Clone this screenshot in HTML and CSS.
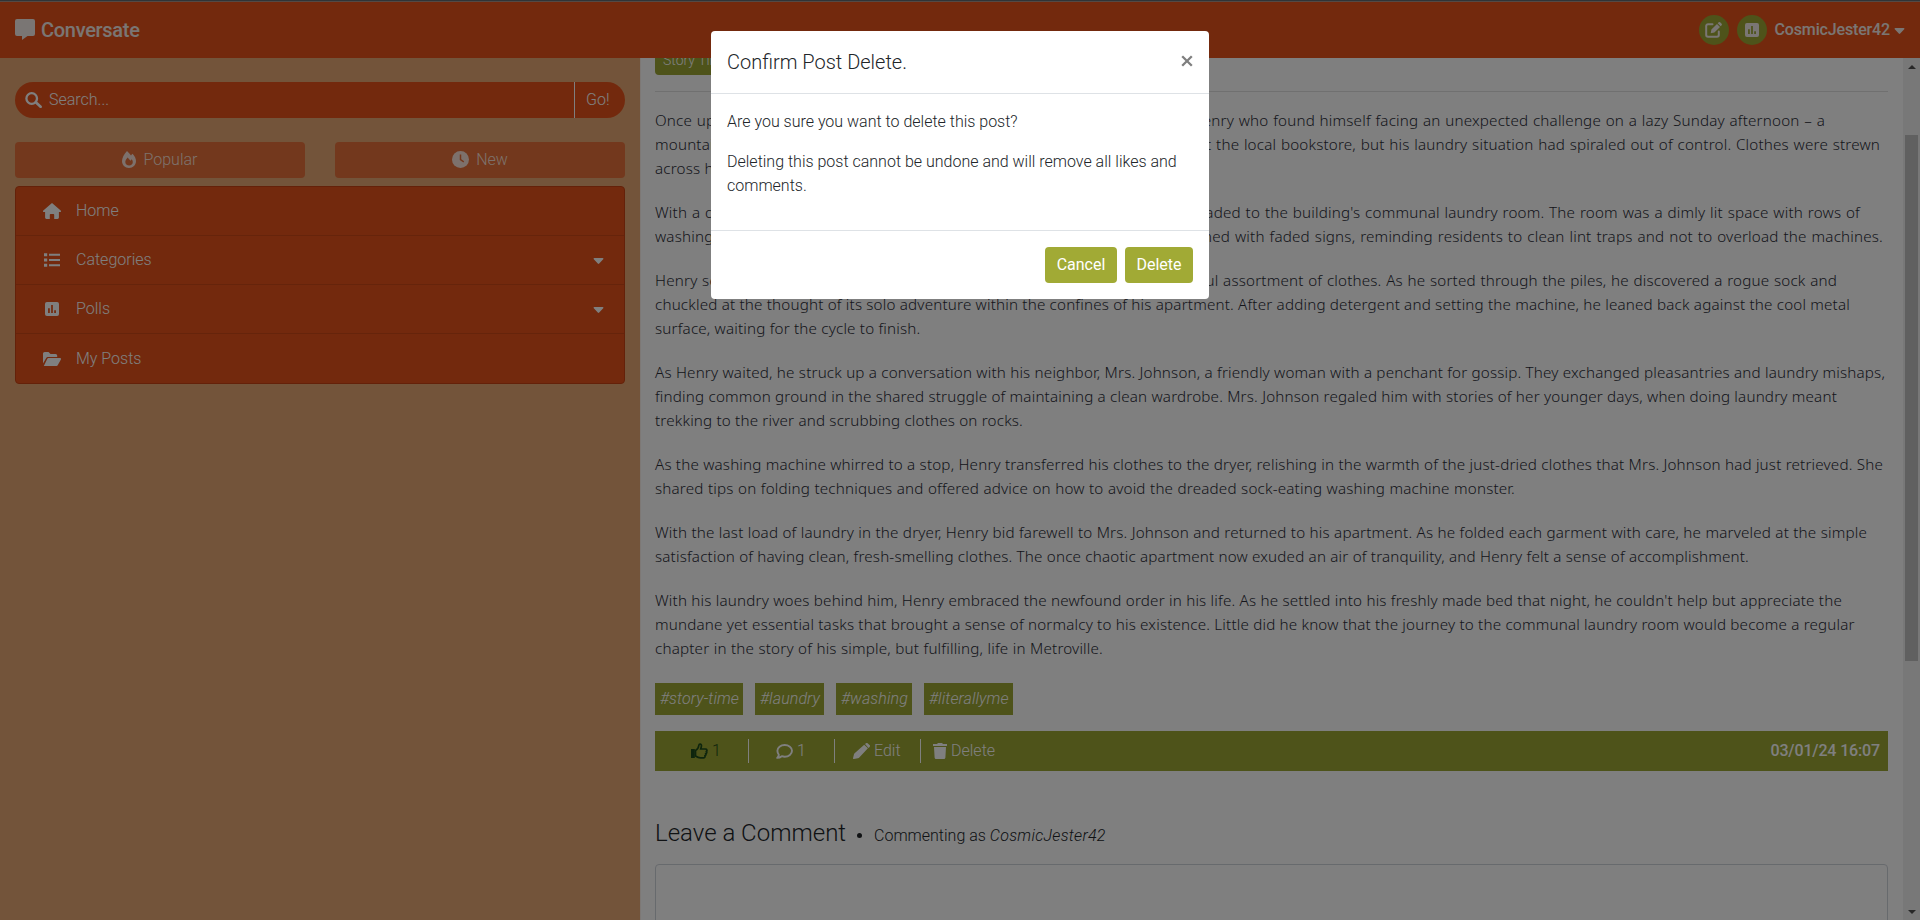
FILE: index.html
```html
<!DOCTYPE html>
<html lang="en">
<head>
<meta charset="utf-8">
<title>Conversate</title>
<link rel="stylesheet" href="styles.css">
</head>
<body>
<svg class="defs" width="0" height="0" aria-hidden="true">
  <symbol id="i-poll" viewBox="0 0 16 16"><path fill-rule="evenodd" d="M2.2 0h11.6A2.2 2.2 0 0 1 16 2.2v11.6a2.2 2.2 0 0 1-2.200 2.200H2.200A2.200 2.200 0 0 1 0 13.800V2.200A2.200 2.200 0 0 1 2.200 0zM3.500 7v5.500h2V7zM7 3.500v9h2v-9zM10.500 9.500v3h2v-3z"/></symbol>
  <symbol id="i-caret" viewBox="0 0 12 7"><path d="M1.200 0h9.600c.9 0 1.300 1 .7 1.600L6.800 6.500a1.100 1.100 0 0 1-1.600 0L.5 1.600C-.1 1 .3 0 1.200 0z"/></symbol>
</svg>
<div class="app">
  <header class="topbar">
    <div class="brand">
      <svg width="20" height="21" viewBox="0 0 20 21"><path d="M2 0h16a2 2 0 0 1 2 2v13a2 2 0 0 1-2 2h-5.500l-5.500 4v-4H2a2 2 0 0 1-2-2V2a2 2 0 0 1 2-2z"/></svg>
      <span>Conversate</span>
    </div>
    <div class="account">
      <span class="round"><svg width="17" height="16" viewBox="0 0 17 16"><path d="M7.500 2.200H3A1.800 1.800 0 0 0 1.200 4v9A1.800 1.800 0 0 0 3 14.800h9a1.800 1.800 0 0 0 1.800-1.800V9.500" fill="none" stroke="currentColor" stroke-width="2" stroke-linecap="round"/><path d="M12.700 1.200l3 3 .7-.7a1.400 1.400 0 0 0 0-2l-1-1a1.400 1.400 0 0 0-2 0zM12 1.900l3 3-5.600 5.600-3.700.8.700-3.800z"/></svg></span>
      <span class="round"><svg width="14" height="14"><use href="#i-poll"/></svg></span>
      <span class="user">CosmicJester42</span>
      <svg class="user-caret" width="11" height="6"><use href="#i-caret"/></svg>
    </div>
  </header>
  <div class="columns">
    <aside class="sidebar">
      <div class="search">
        <svg width="17" height="16" viewBox="0 0 17 16"><circle cx="6.700" cy="6.500" r="5.300" fill="none" stroke="currentColor" stroke-width="2.300"/><path d="M10.800 10.300l4.800 4.500" stroke="currentColor" stroke-width="2.600" stroke-linecap="round"/></svg>
        <span class="placeholder">Search...</span>
        <span class="go">Go!</span>
      </div>
      <div class="filters">
        <div class="filter"><svg width="16" height="17" viewBox="0 0 16 17"><path fill-rule="evenodd" d="M6 0c1.600 1.400 2.900 2.900 4 4.500.5-.7 1-1.300 1.500-1.800C13.700 4.900 15 7.600 15 10c0 4-3 7-7 7s-7-3-7-7C1 7 3 3.300 6 0zM8.200 14.500c2 0 3.600-1.300 3.600-3.400 0-1.100-.5-2-1.100-2.900L9.500 9.800 6.600 6.500C5.200 8.200 4.300 9.500 4.300 11c0 2.200 1.700 3.500 3.900 3.500z"/></svg>Popular</div>
        <div class="filter new"><svg width="17" height="17" viewBox="0 0 17 17"><circle cx="8.500" cy="8.500" r="8.500"/><path class="cut" d="M8.500 3.500v5.200l3.300 2.100"/></svg>New</div>
      </div>
      <nav class="menu">
        <a class="item"><span class="ico"><svg width="18" height="16" viewBox="0 0 18 16"><path d="M9 0l8.700 7.600c.6.600.3 1.400-.6 1.400h-1.200v5.600c0 .8-.6 1.400-1.400 1.400h-3.300v-4c0-.6-.4-1-1-1H7.800c-.6 0-1 .4-1 1v4H3.500c-.8 0-1.400-.6-1.400-1.400V9H.9C0 9-.3 8.200.3 7.600z"/></svg></span>Home</a>
        <a class="item"><span class="ico"><svg width="16" height="14" viewBox="0 0 16 14"><path d="M0 .2h3.200v3H0zM0 5.500h3.200v3H0zM0 10.800h3.200v3H0zM5 .8h11v2H5zM5 6h11v2H5zM5 11.300h11v2H5z"/></svg></span>Categories<svg class="drop" width="11" height="6"><use href="#i-caret"/></svg></a>
        <a class="item"><span class="ico"><svg width="14" height="14"><use href="#i-poll"/></svg></span>Polls<svg class="drop" width="11" height="6"><use href="#i-caret"/></svg></a>
        <a class="item last"><span class="ico"><svg width="18" height="14" viewBox="0 0 18 14"><path d="M0 11.500V1.800C0 .8.700 0 1.700 0h3.800l2 2h5c1 0 1.700.8 1.700 1.700V5H5.200c-.9 0-1.700.5-2.100 1.200zM.8 14l3.500-7.300c.2-.4.600-.7 1.100-.7h11.700c.8 0 1.200.8.8 1.500l-3.200 5.800c-.2.400-.6.700-1.100.7z"/></svg></span>My Posts</a>
      </nav>
    </aside>
    <main class="content">
      <div class="category">Story Time</div>
      <hr class="rule">
      <article class="story">
        <p><span class="line l1">Once upon a time in the city of Metroville, there lived a young chap named Henry who found himself facing an unexpected challenge on a lazy Sunday afternoon – a</span><span class="line l2">mountain of dirty laundry. He had been caught up in his work and his shifts at the local bookstore, but his laundry situation had spiraled out of control. Clothes were strewn</span><span class="line">across his apartment in colorful heaps.</span></p>
        <p><span class="line l4">With a deep sigh, Henry gathered clothes in a basket, took detergent, and headed to the building's communal laundry room. The room was a dimly lit space with rows of</span><span class="line l5">washing machines humming along. The walls of the laundry room were adorned with faded signs, reminding residents to clean lint traps and not to overload the machines.</span></p>
        <p><span class="line l6">Henry selected a vacant washing machine and began to load it with his colorful assortment of clothes. As he sorted through the piles, he discovered a rogue sock and</span><span class="line l7">chuckled at the thought of its solo adventure within the confines of his apartment. After adding detergent and setting the machine, he leaned back against the cool metal</span><span class="line l8">surface, waiting for the cycle to finish.</span></p>
        <p><span class="line l9">As Henry waited, he struck up a conversation with his neighbor, Mrs. Johnson, a friendly woman with a penchant for gossip. They exchanged pleasantries and laundry mishaps,</span><span class="line l10">finding common ground in the shared struggle of maintaining a clean wardrobe. Mrs. Johnson regaled him with stories of her younger days, when doing laundry meant</span><span class="line l11">trekking to the river and scrubbing clothes on rocks.</span></p>
        <p><span class="line l12">As the washing machine whirred to a stop, Henry transferred his clothes to the dryer, relishing in the warmth of the just-dried clothes that Mrs. Johnson had just retrieved. She</span><span class="line l13">shared tips on folding techniques and offered advice on how to avoid the dreaded sock-eating washing machine monster.</span></p>
        <p><span class="line l14">With the last load of laundry in the dryer, Henry bid farewell to Mrs. Johnson and returned to his apartment. As he folded each garment with care, he marveled at the simple</span><span class="line l15">satisfaction of having clean, fresh-smelling clothes. The once chaotic apartment now exuded an air of tranquility, and Henry felt a sense of accomplishment.</span></p>
        <p><span class="line l16">With his laundry woes behind him, Henry embraced the newfound order in his life. As he settled into his freshly made bed that night, he couldn't help but appreciate the</span><span class="line l17">mundane yet essential tasks that brought a sense of normalcy to his existence. Little did he know that the journey to the communal laundry room would become a regular</span><span class="line l18">chapter in the story of his simple, but fulfilling, life in Metroville.</span></p>
      </article>
      <div class="tags"><span class="tag t1">#story-time</span><span class="tag t2">#laundry</span><span class="tag t3">#washing</span><span class="tag t4">#literallyme</span></div>
      <div class="actions">
        <span class="act like"><svg width="17" height="16" viewBox="0 0 17 16"><path d="M0 6h3.800v9H0z"/><path d="M4.500 7.500c1.800-.8 3-2.700 3.300-5C8 1.300 8.500.9 9.200 1c1.200.3 1.500 1.500 1 3.200L9.700 6h4.800c1.500 0 1.900 1.600.9 2.400.7.900.3 1.900-.6 2.200.4.900 0 1.700-.8 2 .3 1.300-.4 2.200-1.600 2.200H9.500c-1.800 0-3-.5-5-1.800z" fill="none" stroke="currentColor" stroke-width="1.700"/></svg>1</span>
        <span class="act comment"><svg width="17" height="15" viewBox="0 0 17 15"><path d="M8.700 1c4.100 0 7.300 2.500 7.300 5.800s-3.200 5.900-7.300 5.900c-1 0-2-.2-2.900-.5-1.100.9-2.700 1.700-4.600 1.700.9-.9 1.500-2 1.600-3.100C2 9.700 1.400 8.300 1.400 6.800 1.400 3.500 4.600 1 8.700 1z" fill="none" stroke="currentColor" stroke-width="1.900" stroke-linejoin="round"/></svg>1</span>
        <span class="act edit"><svg width="17" height="16" viewBox="0 0 17 16"><path d="M12 1l1-.7a1.500 1.500 0 0 1 1.900.1l1.600 1.500a1.400 1.400 0 0 1 .1 2l-1.100 1zM11.200 1.800l3.700 3.500-8.600 9.300c-.4.400-.8.600-1.300.7L.8 16c-.5.100-.9-.3-.8-.8l1-3.900c.1-.4.300-.8.600-1.100z"/></svg>Edit</span>
        <span class="act delete"><svg width="14" height="16" viewBox="0 0 14 16"><path d="M0 1h4l1-1h4l1 1h4v2H0zM1 4h12l-.6 10.500c0 .8-.7 1.500-1.500 1.500H3.100c-.8 0-1.500-.7-1.500-1.500z"/></svg>Delete</span>
        <span class="date">03/01/24 16:07</span>
      </div>
      <div class="comment-head"><h3>Leave a Comment</h3><span class="dot"></span><span class="as">Commenting as <i>CosmicJester42</i></span></div>
      <div class="box"></div>
    </main>
    <div class="scrollbar"><i class="up"></i><div class="thumb"></div><i class="down"></i></div>
  </div>
</div>
<div class="backdrop">
  <div class="modal">
    <div class="modal-head"><h5>Confirm Post Delete.</h5><svg class="close" width="12" height="12" viewBox="0 0 12 12"><path d="M1.200 1.200l9.600 9.600M10.800 1.200l-9.600 9.600" stroke="currentColor" stroke-width="2.300"/></svg></div>
    <div class="modal-body"><p>Are you sure you want to delete this post?</p><p>Deleting this post cannot be undone and will remove all likes and comments.</p></div>
    <div class="modal-foot"><button class="btn cancel">Cancel</button><button class="btn confirm">Delete</button></div>
  </div>
</div>
</body>
</html>
```

FILE: styles.css
```css
* { box-sizing: border-box; }
body { margin: 0; height: 920px; overflow: hidden; font: 300 16px/24px Roboto, sans-serif; color: #212529; background: #fff; }
svg { display: block; flex: none; fill: currentColor; }
p, h3, h5 { margin: 0; font-weight: 300; }
.defs { position: absolute; }
.app { height: 920px; display: flex; flex-direction: column; border-top: 1px solid #60686e; }
.topbar { height: 57px; flex: none; display: flex; justify-content: space-between; background: #e7531a; border-top: 1px solid #a8938a; padding: 0 15px; color: #fff; }
.brand { display: flex; gap: 6px; padding-top: 17px; font-size: 20px; font-weight: 500; color: #f5ede8; letter-spacing: -0.3px; }
.brand span { line-height: 22px; }
.account { display: flex; align-items: center; padding-top: 0; font-weight: 500; color: #f5ede8; }
.round { width: 30px; height: 30px; margin-right: 8px; border-radius: 50%; background: #9ca634; display: grid; place-items: center; }
.user { letter-spacing: -0.15px; line-height: 24px; }
.user-caret { margin: 1px 0 0 4px; }
.columns { flex: 1; min-height: 0; display: flex; }
.sidebar { width: 640px; padding: 24px 15px; background: #e7a874; color: #fff; }
.search { height: 36px; border-radius: 18px; background: #e7531a; display: flex; align-items: center; padding-left: 10px; }
.placeholder { flex: 1; padding-left: 7px; }
.go { height: 36px; width: 51px; border-left: 1px solid #fff; padding-left: 11px; line-height: 35px; }
.filters { display: flex; gap: 30px; margin-top: 24px; }
.filter { width: 290px; height: 36px; border-radius: 4px; background: #e7703a; display: flex; align-items: center; justify-content: center; gap: 7px; color: #fbe3d8; padding: 0 2px 1px 0; }
.filter.new { padding-right: 0; }
.filter .cut { fill: none; stroke: #e7703a; stroke-width: 1.5; }
.menu { margin-top: 8px; height: 198px; border: 1px solid #c94312; border-radius: 4px; background: #e7531a; }
.item { height: 49px; display: flex; align-items: center; padding: 0 20px 1px 27px; border-bottom: 1px solid #cc4816; }
.item.last { border: 0; padding-bottom: 0; }
.ico { width: 18px; margin-right: 15px; display: grid; place-items: center; }
.drop { margin: 2px 0 0 auto; }
.content { flex: 1; padding: 0 15px; overflow: hidden; border-left: 1px solid #fbf0ea; padding-left: 14px; }
.category { width: 93px; height: 17px; overflow: hidden; border-radius: 0 0 4px 4px; background: #9ca634; color: #fff; font-size: 14px; line-height: 5px; padding-left: 8px; }
.rule { margin: 16px 0; border: 0; border-top: 1px solid #e0e0e0; }
.story { font: 400 15.2px/24px "Noto Sans", sans-serif; letter-spacing: .18px; color: #2b2d38; }
.story p { margin-bottom: 20px; }
.line { display: block; text-align-last: justify; width: fit-content; white-space: nowrap; }
/* measured column widths of the justified lines */
.l1 { width: 1170px; } .l2 { width: 1225px; } .l4 { width: 1205px; } .l5 { width: 1228px; }
.l6 { width: 1182px; } .l7 { width: 1195px; } .l8 { width: 265px; } .l9 { width: 1230px; }
.l10 { width: 1182px; } .l11 { width: 367px; } .l12 { width: 1228px; } .l13 { width: 860px; }
.l14 { width: 1212px; } .l15 { width: 1094px; } .l16 { width: 1187px; } .l17 { width: 1199px; } .l18 { width: 448px; }
.tags { display: flex; gap: 12px; padding-top: 3px; }
.tag { height: 32px; background: #9ca634; color: #fff; font-style: italic; padding-left: 5px; line-height: 31px; white-space: nowrap; letter-spacing: .1px; }
.t1 { width: 88px; } .t2 { width: 69px; } .t3 { width: 76px; } .t4 { width: 89px; }
.actions { margin-top: 16px; height: 40px; background: #9ca634; color: #fff; display: flex; align-items: center; padding-right: 8px; }
.act { height: 24px; display: flex; align-items: center; gap: 4px; border-right: 1px solid #fff; line-height: 24px; }
.like { width: 94px; padding-left: 36px; color: #1c4a1a; }
.comment { width: 86px; padding-left: 27px; }
.edit { width: 86px; padding-left: 18px; }
.delete { border: 0; padding-left: 12px; }
.date { margin-left: auto; font-weight: 500; letter-spacing: -.15px; }
.comment-head { display: flex; align-items: baseline; margin-top: 48px; }
.as i { letter-spacing: .3px; }
h3 { font-size: 24px; line-height: 29px; }
.dot { width: 5px; height: 5px; border-radius: 50%; background: #212529; margin: 3px 12px 0 11px; align-self: center; }
.box { margin-top: 16px; height: 100px; border: 1px solid #ced4da; border-radius: 4px; }
.scrollbar { width: 17px; background: #f1f1f1; display: flex; flex-direction: column; align-items: center; padding: 7px 0 6px; }
.up, .down { border: 4px solid transparent; }
.up { border-top: 0; border-bottom: 4px solid #505050; }
.down { border-bottom: 0; border-top: 4px solid #505050; margin-top: auto; }
.thumb { width: 13px; height: 526px; background: #c1c1c1; margin-top: 66px; }
.backdrop { position: fixed; inset: 0; background: rgba(0, 0, 0, .5); }
.modal { width: 498px; height: 268px; margin: 31px auto 0; background: #fff; border-radius: 4px; }
.modal-head { height: 63px; border-bottom: 1px solid #dee2e6; padding: 16px; display: flex; justify-content: space-between; }
h5 { font-size: 20px; line-height: 30px; }
.close { color: #7f7f7f; margin: 8px 0 0 0; }
.modal-body { padding: 16px; height: 136px; }
.modal-body p { margin-bottom: 16px; }
.modal-foot { border-top: 1px solid #dee2e6; padding: 16px; display: flex; justify-content: flex-end; gap: 8px; }
.btn { height: 36px; border: 0; border-radius: 4px; background: #a1aa35; color: #fff; font: 400 16px/24px Roboto, sans-serif; padding: 0 0 1px; }
.cancel { width: 72px; } .confirm { width: 68px; }
```
